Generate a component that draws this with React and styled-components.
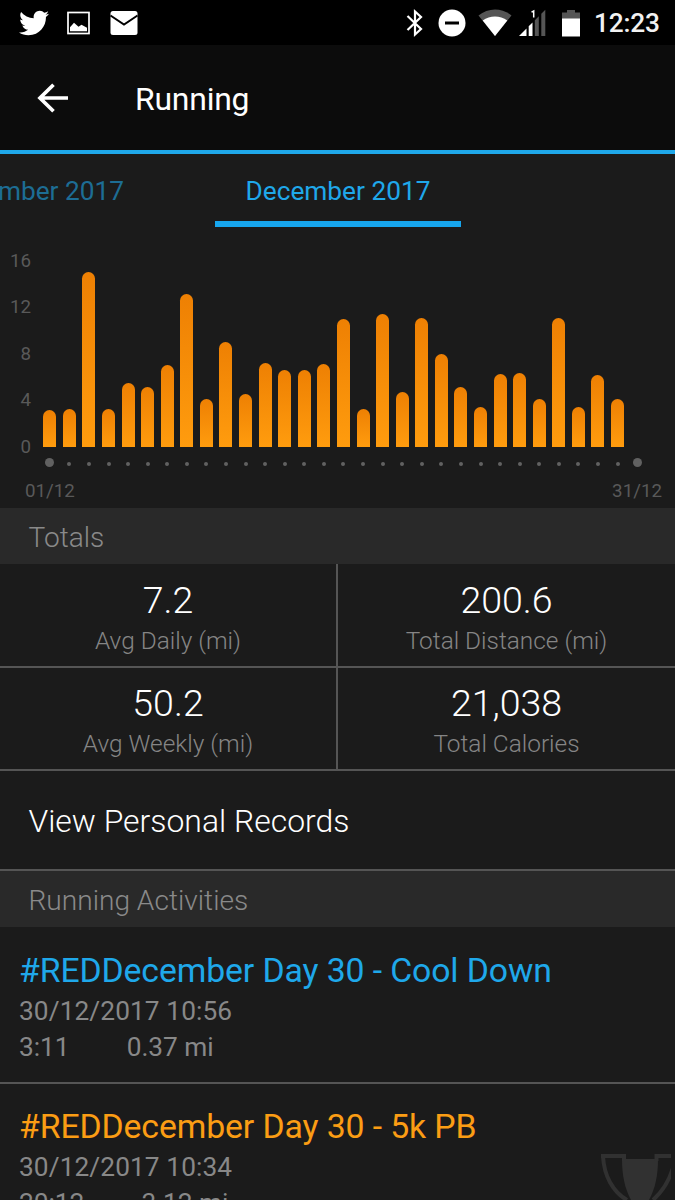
import React from "react";
import styled, { createGlobalStyle } from "styled-components";
import { FaTwitter } from "react-icons/fa";

const GlobalStyle = createGlobalStyle`
  * { box-sizing: border-box; }
  body {
    margin: 0;
    background: #1b1b1b;
    font-family: Roboto, "Liberation Sans", sans-serif;
  }
`;

const Screen = styled.div`
  position: relative;
  width: 675px;
  height: 1200px;
  overflow: hidden;
  background: #1b1b1b;
  color: #fff;
`;

const StatusBar = styled.div`
  height: 45px;
  background: #000;
  display: flex;
  align-items: center;
  justify-content: space-between;
  padding: 0 16px 0 19px;
`;

const IconGroup = styled.div`
  display: flex;
  align-items: center;
  gap: ${(p) => p.$gap}px;
`;

const StatusIcon = styled.svg`
  display: block;
  flex: none;
  width: ${(p) => p.$w}px;
  height: 28px;
  margin-right: ${(p) => p.$after || 0}px;
`;

const Clock = styled.span`
  width: 65px;
  font-size: 26.25px;
  line-height: 45px;
  padding-top: 2px;
  letter-spacing: -0.2px;
  font-weight: 500;
  color: #f2f2f2;
`;

const AppBar = styled.header`
  height: 109px;
  background: #0c0c0c;
  border-bottom: 4px solid #1fa8ea;
  display: flex;
  align-items: center;
  padding-left: 37px;
`;

const BackIcon = styled.svg`
  display: block;
  width: 32px;
  height: 32px;
  margin: 0 66px 0 0;
`;

const AppTitle = styled.h1`
  margin: 3px 0 0;
  font-size: 31.9px;
  line-height: 38px;
  font-weight: 400;
  letter-spacing: -0.2px;
`;

const Tabs = styled.nav`
  height: 73px;
  display: flex;
  justify-content: space-between;
  width: 461px;
`;

const Tab = styled.div`
  width: ${(p) => (p.$active ? 246 : 124)}px;
  display: flex;
  justify-content: ${(p) => (p.$active ? "center" : "flex-end")};
  font-size: 26.25px;
  line-height: 75px;
  white-space: nowrap;
  color: ${(p) => (p.$active ? "#1fa8ea" : "#1d6d94")};
  border-bottom: ${(p) => (p.$active ? "6px solid #17a6ee" : "none")};
`;

const ChartPanel = styled.section`
  height: 281px;
  padding-top: 22px;
`;

const Plot = styled.div`
  display: flex;
  height: 198px;
`;

const Axis = styled.div`
  width: 31px;
  margin-right: 9px;
  display: flex;
  flex-direction: column;
  justify-content: space-between;
  text-align: right;
  font-size: 18.75px;
  line-height: 22px;
  color: #595959;
  height: 208px;
  margin-top: 0.5px;
`;

const Bars = styled.div`
  display: flex;
  align-items: flex-end;
  width: 606.7px;
`;

const BarSlot = styled.div`
  flex: 1;
  display: flex;
  justify-content: center;
`;

const Bar = styled.div`
  width: 13px;
  border-radius: 6.5px 6.5px 0 0;
  background: linear-gradient(#ee8003, #ff9c0e);
`;

const Dots = styled.div`
  display: flex;
  align-items: center;
  width: 606.7px;
  height: 10px;
  margin: 11px 0 0 40px;
`;

const Dot = styled.i`
  display: block;
  width: ${(p) => (p.$end ? 9 : 4)}px;
  height: ${(p) => (p.$end ? 9 : 4)}px;
  margin-top: ${(p) => (p.$end ? -1 : 2)}px;
  border-radius: 50%;
  background: #616161;
`;

const DateRange = styled.div`
  display: flex;
  justify-content: space-between;
  padding: 12px 13px 0 25px;
  font-size: 18.75px;
  line-height: 22px;
  color: #595959;
`;

const SectionHeader = styled.h2`
  margin: 0;
  height: 56px;
  padding: 1px 0 0 28.5px;
  background: #292929;
  color: #8a8a8a;
  font-size: 28.1px;
  line-height: 57px;
  font-weight: 300;
`;

const TotalsGrid = styled.section`
  display: grid;
  grid-template-columns: 338px 337px;
  grid-auto-rows: 103.5px;
`;

const Total = styled.div`
  border-bottom: 2px solid #555;
  border-right: ${(p) => (p.$divided ? "2px solid #555" : "none")};
  text-align: center;
  font-weight: 300;
  padding-top: 13.5px;
`;

const TotalValue = styled.div`
  font-size: 37.5px;
  line-height: 44px;
`;

const TotalLabel = styled.div`
  font-size: 24.4px;
  line-height: 28px;
  margin-top: 5px;
  color: #858585;
`;

const RecordsLink = styled.div`
  height: 100px;
  padding: 1px 0 0 28.5px;
  border-bottom: 2px solid #555;
  font-size: 31.9px;
  line-height: 99px;
  font-weight: 300;
`;

const Activity = styled.article`
  height: 156.5px;
  padding: 23.5px 0 0 19px;
  border-bottom: 2px solid #555;
`;

const ActivityTitle = styled.h3`
  margin: 0;
  font-size: 33.75px;
  line-height: 40px;
  font-weight: 400;
  letter-spacing: -0.1px;
  color: ${(p) => p.$color};
`;

const ActivityText = styled.div`
  display: flex;
  gap: 57px;
  font-size: 26.25px;
  line-height: 36px;
  letter-spacing: ${(p) => p.$spacing || 0}px;
  margin-top: ${(p) => p.$top || 0}px;
  color: #888;
`;

const TrophyIcon = styled.svg`
  position: absolute;
  left: 600px;
  top: 1150px;
  width: 71px;
  height: 50px;
`;

const PX_PER_MILE = 11.625;
const DAILY_MILES = [
  3.18, 3.27, 15.03, 3.24, 5.53, 5.13, 7.05, 13.13, 4.13, 9.03, 4.58, 7.22,
  6.6, 6.6, 7.17, 11.04, 3.27, 11.47, 4.7, 11.12, 8, 5.16, 3.44, 6.28, 6.36,
  4.13, 11.12, 3.44, 6.17, 4.13, 0,
];

const TOTALS = [
  ["7.2", "Avg Daily (mi)"],
  ["200.6", "Total Distance (mi)"],
  ["50.2", "Avg Weekly (mi)"],
  ["21,038", "Total Calories"],
];

const ACTIVITIES = [
  { title: "#REDDecember Day 30 - Cool Down", color: "#1fa8ea", date: "30/12/2017 10:56", time: "3:11", distance: "0.37 mi" },
  { title: "#REDDecember Day 30 - 5k PB", color: "#fb9d14", date: "30/12/2017 10:34", time: "20:12", distance: "3.12 mi" },
];

function StatusIcons() {
  return (
    <StatusBar>
      <IconGroup $gap={18}>
        <FaTwitter size={30} />
        <StatusIcon $w={23} viewBox="0 0 23 28">
          <rect x="1" y="3.5" width="21" height="21" fill="none" stroke="#fff" strokeWidth="1.7" />
          <path d="M3 22.200v-4l4-4.500 4.500 4 3-2 5.500 3v3.500z" fill="#fff" />
        </StatusIcon>
        <StatusIcon $w={31} viewBox="-2 0 31 28">
          <rect x=".5" y="2" width="27" height="24" rx="2.5" fill="#fff" />
          <path d="M.5 6.500 14 15.500 27.500 6.500" fill="none" stroke="#000" strokeWidth="2" />
        </StatusIcon>
      </IconGroup>
      <IconGroup $gap={0}>
        <StatusIcon $w={18} $after={14} viewBox="0 0 18 28">
          <path d="M1.500 7 15 20 9 25.500V2.500L15 8 1.500 21" fill="none" stroke="#fff" strokeWidth="2.2" />
        </StatusIcon>
        <StatusIcon $w={28} $after={12} viewBox="0 0 28 28">
          <circle cx="14" cy="14" r="13.500" fill="#fff" />
          <path d="M7 14h14" stroke="#000" strokeWidth="3" />
        </StatusIcon>
        <StatusIcon $w={34} $after={7} viewBox="0 0 34 28">
          <path d="M.5 6.500C10-1.500 24-1.500 33.500 6.500L17 27z" fill="#555" />
          <path d="M4.700 11.500C12 6 22 6 29.300 11.500L17 27z" fill="#fff" />
        </StatusIcon>
        <StatusIcon $w={27} $after={16} viewBox="0 0 27 28">
          <path d="M0 27 7.500 19.500V27z" fill="#fff" />
          <path d="M9.700 17.300 13.500 13.500V27H9.700z" fill="#fff" />
          <path d="M15.800 11.200 19.800 7.200V27h-4z M22.300 4.700 26.300.7V27h-4z" fill="#555" />
          <path d="M12.500 3.200 14.700 2V8.500" fill="none" stroke="#fff" strokeWidth="1.500" />
        </StatusIcon>
        <StatusIcon $w={18} $after={14} viewBox="0 0 18 28">
          <path d="M0 3.500h5V1h8v2.500h5V10H0z" fill="#555" />
          <path d="M0 9.500h18V27.500H0z" fill="#fff" />
        </StatusIcon>
        <Clock>12:23</Clock>
      </IconGroup>
    </StatusBar>
  );
}

export default function App() {
  return (
    <Screen>
      <GlobalStyle />
      <StatusIcons />
      <AppBar>
        <BackIcon viewBox="0 0 32 32" fill="none" stroke="#fff" strokeWidth="3.7">
          <path d="M31 16H3M16.500 2.800 3 16l13.500 13.200" />
        </BackIcon>
        <AppTitle>Running</AppTitle>
      </AppBar>
      <Tabs>
        <Tab>November 2017</Tab>
        <Tab $active>December 2017</Tab>
      </Tabs>
      <ChartPanel>
        <Plot>
          <Axis>
            {[16, 12, 8, 4, 0].map((tick) => (
              <span key={tick}>{tick}</span>
            ))}
          </Axis>
          <Bars>
            {DAILY_MILES.map((miles, day) => (
              <BarSlot key={day}>
                <Bar style={{ height: miles * PX_PER_MILE }} />
              </BarSlot>
            ))}
          </Bars>
        </Plot>
        <Dots>
          {DAILY_MILES.map((_, day) => (
            <BarSlot key={day}>
              <Dot $end={day === 0 || day === DAILY_MILES.length - 1} />
            </BarSlot>
          ))}
        </Dots>
        <DateRange>
          <span>01/12</span>
          <span>31/12</span>
        </DateRange>
      </ChartPanel>
      <SectionHeader>Totals</SectionHeader>
      <TotalsGrid>
        {TOTALS.map(([value, label], i) => (
          <Total key={label} $divided={i % 2 === 0}>
            <TotalValue>{value}</TotalValue>
            <TotalLabel>{label}</TotalLabel>
          </Total>
        ))}
      </TotalsGrid>
      <RecordsLink>View Personal Records</RecordsLink>
      <SectionHeader>Running Activities</SectionHeader>
      {ACTIVITIES.map((a) => (
        <Activity key={a.date}>
          <ActivityTitle $color={a.color}>{a.title}</ActivityTitle>
          <ActivityText $top={2} $spacing={0.1}>{a.date}</ActivityText>
          <ActivityText>
            <span>{a.time}</span>
            <span>{a.distance}</span>
          </ActivityText>
        </Activity>
      ))}
      <TrophyIcon viewBox="0 0 71 50">
        <path d="M22 9h36c0 17-3 30-9 41H31C25 39 22 26 22 9z" fill="#313131" />
        <path d="M1 6h23v5M3 6c1 20 10 36 24 44M75 6H56.500v5M73 18c-4 13-11 24-20 32" fill="none" stroke="#313131" strokeWidth="4" />
      </TrophyIcon>
    </Screen>
  );
}
